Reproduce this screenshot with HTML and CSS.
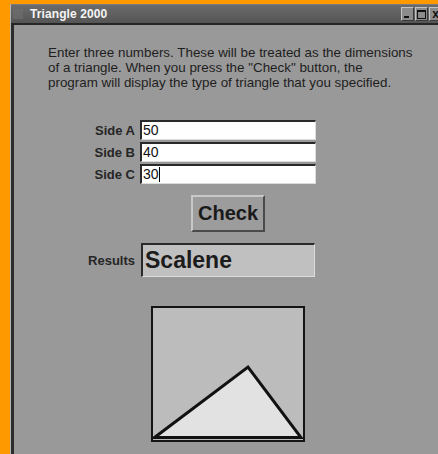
FILE: index.html
```html
<!DOCTYPE html>
<html>
<head>
<meta charset="utf-8">
<title>Triangle 2000</title>
<link rel="stylesheet" href="styles.css">
</head>
<body>
<div class="window">
  <div class="titlebar">
    <span class="app-icon"></span>
    <span class="title">Triangle 2000</span>
    <div class="controls">
      <span class="ctl ctl-min"><span class="bar"></span></span>
      <span class="ctl ctl-max"><span class="box"></span></span>
      <span class="ctl ctl-close">x</span>
    </div>
  </div>
  <div class="content">
    <p class="intro">Enter three numbers. These will be treated as the dimensions<br>of a triangle. When you press the "Check" button, the<br>program will display the type of triangle that you specified.</p>
    <div class="form">
      <label class="label">Side A</label>
      <div class="field">50</div>
      <label class="label">Side B</label>
      <div class="field">40</div>
      <label class="label">Side C</label>
      <div class="field">30<span class="caret"></span></div>
      <button class="check">Check</button>
      <span class="label results-label">Results</span>
      <div class="result">Scalene</div>
      <div class="canvas">
        <svg width="150" height="132" viewBox="0 0 150 132">
          <polygon points="1.5,129.5 95,59 148,129.5" fill="#e2e2e2" stroke="#111" stroke-width="3" stroke-linejoin="miter"/>
        </svg>
      </div>
    </div>
  </div>
</div>
</body>
</html>
```
FILE: styles.css
```css
html, body {
  margin: 0;
  padding: 0;
}

body {
  background: #ff9900;
  width: 438px;
  height: 454px;
  overflow: hidden;
  font-family: "Liberation Sans", Arial, sans-serif;
}

.window {
  margin: 4px 0 0 10px;
  width: 434px;
  height: 460px;
  border-left: 1px solid #b4b4b4;
  display: flex;
  flex-direction: column;
  background: #999999;
}

.titlebar {
  height: 18px;
  display: flex;
  align-items: center;
  background: linear-gradient(#6b6b6b, #555555);
  border-top: 1px solid #7a7a7a;
  border-bottom: 2px solid #262626;
  flex-shrink: 0;
}

.app-icon {
  width: 10px;
  height: 10px;
  margin-left: 2px;
  background: #707070;
  opacity: 0.6;
}

.title {
  margin-left: 7px;
  color: #f4f4f4;
  font-size: 12px;
  font-weight: bold;
  letter-spacing: 0.1px;
}

.controls {
  margin-left: auto;
  margin-right: 3px;
  display: flex;
  gap: 1px;
}

.ctl {
  box-sizing: border-box;
  width: 13px;
  height: 14px;
  background: #8c8c8c;
  border-top: 1px solid #c4c4c4;
  border-left: 1px solid #c4c4c4;
  border-right: 1px solid #3a3a3a;
  border-bottom: 1px solid #3a3a3a;
  position: relative;
  display: flex;
  align-items: center;
  justify-content: center;
  color: #111;
  font-size: 12px;
  font-weight: bold;
  line-height: 1;
}

.ctl-min .bar {
  position: absolute;
  left: 2px;
  bottom: 2px;
  width: 5px;
  height: 2px;
  background: #111;
}

.ctl-max .box {
  width: 7px;
  height: 6px;
  border: 1px solid #111;
  border-top-width: 2px;
}

.content {
  flex: 1;
  border-left: 3px solid #2c2c2c;
  background: #999999;
  display: flex;
  flex-direction: column;
}

.intro {
  margin: 20px 0 0 34px;
  font-size: 13.4px;
  line-height: 15px;
  color: #1e1e1e;
}

.form {
  margin-top: 30px;
  display: grid;
  grid-template-columns: 126px 176px;
  row-gap: 2px;
  align-items: center;
}

.label {
  justify-self: end;
  padding-right: 5px;
  font-size: 13px;
  font-weight: bold;
  color: #262626;
}

.field {
  box-sizing: border-box;
  height: 20px;
  background: #ffffff;
  border-top: 2px solid #2a2a2a;
  border-left: 2px solid #2a2a2a;
  border-right: 1px solid #dcdcdc;
  border-bottom: 1px solid #dcdcdc;
  padding-left: 1px;
  font-size: 14px;
  line-height: 17px;
  color: #111;
  display: flex;
  align-items: center;
}

.caret {
  display: inline-block;
  width: 1px;
  height: 15px;
  background: #000;
}

.check {
  grid-column: 2;
  justify-self: center;
  margin-top: 9px;
  box-sizing: border-box;
  width: 74px;
  height: 37px;
  padding: 0;
  background: #9c9c9c;
  border-top: 2px solid #c8c8c8;
  border-left: 2px solid #c8c8c8;
  border-right: 2px solid #4a4a4a;
  border-bottom: 2px solid #4a4a4a;
  font-family: "Liberation Sans", Arial, sans-serif;
  font-size: 20px;
  font-weight: bold;
  color: #1a1a1a;
}

.results-label {
  margin-top: 9px;
}

.result {
  margin-top: 9px;
  box-sizing: border-box;
  width: 174px;
  height: 34px;
  margin-left: 1px;
  background: #c0c0c0;
  border-top: 2px solid #2a2a2a;
  border-left: 2px solid #2a2a2a;
  border-right: 1px solid #dcdcdc;
  border-bottom: 1px solid #dcdcdc;
  padding-left: 2px;
  font-size: 23px;
  font-weight: bold;
  color: #1c1c1c;
  display: flex;
  align-items: center;
}

.canvas {
  grid-column: 2;
  justify-self: center;
  margin-top: 27px;
  width: 150px;
  height: 132px;
  border: 2px solid #141414;
  background: #bcbcbc;
  display: flex;
}
```
